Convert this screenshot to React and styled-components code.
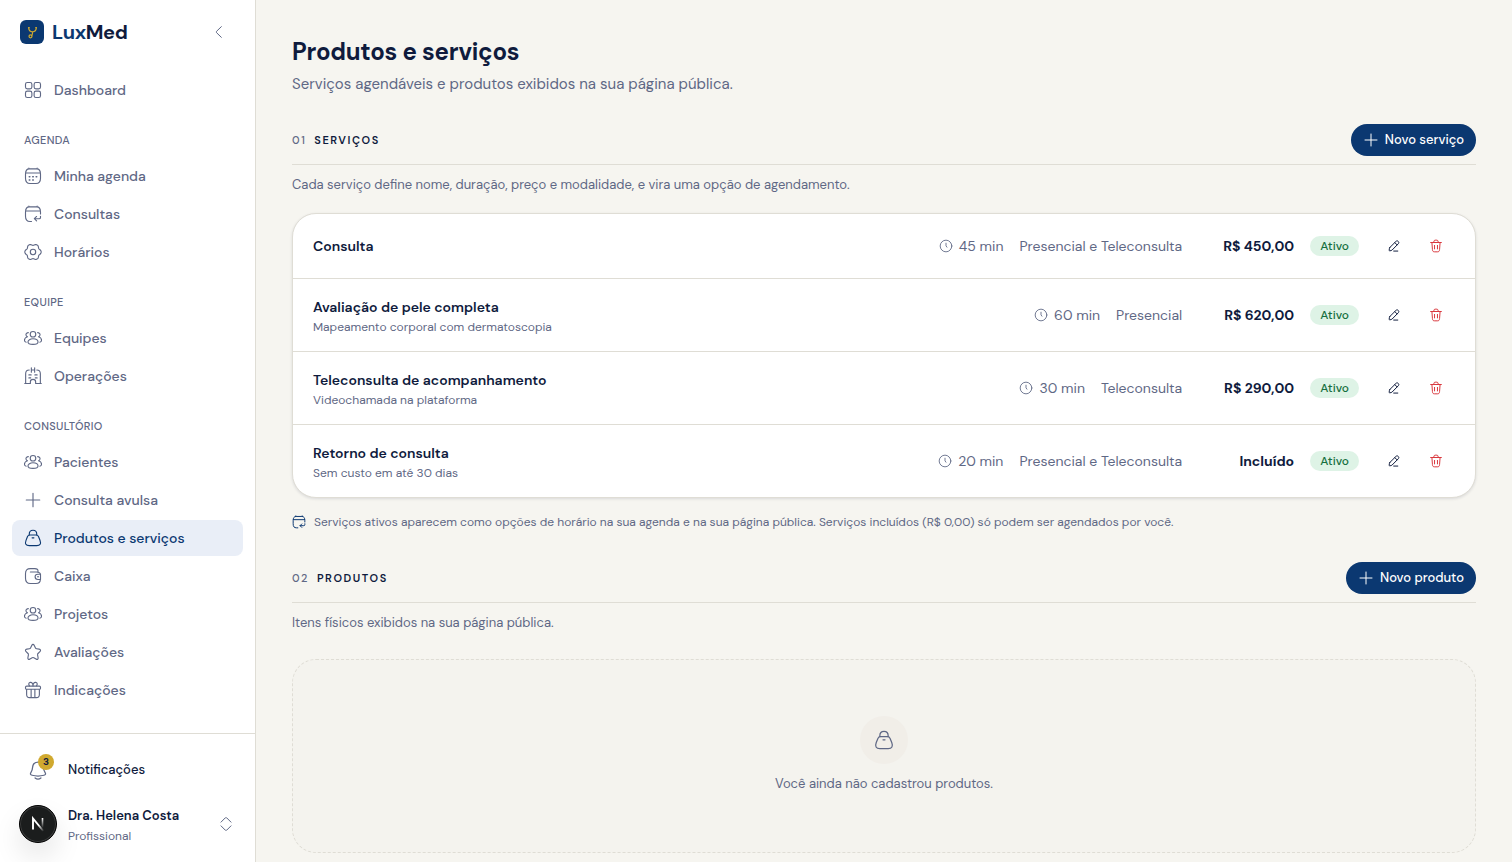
import React from 'react'
import styled, { createGlobalStyle, css } from 'styled-components'

const c = {
	ink: '#0f1b3d',
	muted: '#5f6885',
	brand: '#0b3871',
	line: '#dfddd5',
	page: '#f6f5f0',
	active: '#e9eef7',
	gold: '#d0a92f',
	red: '#d9363c',
}

const GlobalStyle = createGlobalStyle`
	*, *::before, *::after { box-sizing: border-box; }
	body {
		margin: 0;
		background: ${c.page};
		color: ${c.ink};
		font-family: 'DM Sans', Inter, 'Liberation Sans', sans-serif;
		font-size: 14px;
		line-height: 20px;
	}
	h1, h2, h3, p, ul { margin: 0; padding: 0; }
	ul { list-style: none; }
	a { color: inherit; text-decoration: none; }
	button { font: inherit; color: inherit; border: 0; padding: 0; background: none; cursor: pointer; }
`

// six rounded lobes, one of them pointing right
const gearPoints = Array.from({ length: 72 }, (_, i) => {
	const t = (i * Math.PI) / 36
	const r = 10 + Math.cos(6 * t) - 0.1 * Math.cos(12 * t)
	return `${(12 + r * Math.cos(t)).toFixed(2)},${(12 + r * Math.sin(t)).toFixed(2)}`
}).join(' ')

/* Icons, all drawn on a 24 x 24 grid */
const icons = {
	grid: (
		<>
			<rect x='2' y='2' width='8.5' height='8.5' rx='2.4' />
			<rect x='13.5' y='2' width='8.5' height='8.5' rx='2.4' />
			<rect x='2' y='13.5' width='8.5' height='8.5' rx='2.4' />
			<rect x='13.5' y='13.5' width='8.5' height='8.5' rx='2.4' />
		</>
	),
	calendar: (
		<>
			<path d='M2 9.500C2 5 3.500 2.500 7 2.500h10c3.500 0 5 2.500 5 7V15c0 5-1.500 7-6 7H8c-4.500 0-6-2-6-7zM2.300 8h19.400M6.500 2.500V1.500M17.500 2.500V1.500' />
			<path d='M7 13h.8M11.600 13h.8M16.200 13h.8M7 17.200h.8M11.600 17.200h.8' strokeWidth='2' />
		</>
	),
	calendarBack: (
		<>
			<path d='M10 22H8c-4.500 0-6-2-6-7V9.500C2 5 3.500 2.500 7 2.500h10c3.500 0 5 2.500 5 7V12M2.300 8h19.400M6.500 2.500V1.500M17.500 2.500V1.500' />
			<path d='M22 15v1.500c0 1.200-.6 1.800-1.800 1.800H14M16.800 15.300l-3 3 3 3' />
		</>
	),
	gear: (
		<>
			<circle cx='12' cy='12' r='3.600' />
			<polygon points={gearPoints} />
		</>
	),
	users: (
		<>
			<circle cx='12' cy='7' r='3.700' />
			<path d='M5.300 17.300c0-2.500 3-4.300 6.700-4.300s6.700 1.800 6.700 4.300c0 2.200-2 3.200-6.700 3.200s-6.700-1-6.700-3.200z' />
			<path d='M5.800 4.800C3.700 4.900 2.500 6.200 2.600 7.700c.1 1.300.8 2.200 2 2.700C2 11.200.6 13 .6 14.900c0 1.500.8 2.400 2.300 2.700M18.200 4.800c2.100.1 3.300 1.400 3.200 2.900-.1 1.300-.8 2.200-2 2.700 2.600.8 4 2.600 4 4.500 0 1.500-.8 2.400-2.300 2.700' />
		</>
	),
	hospital: (
		<>
			<path d='M1 22h7.500M15.500 22H23M2.200 22V9c0-3.500 1.300-5 4.800-5M21.800 22V9c0-3.500-1.300-5-4.800-5M8.500 22v-2.500c0-2 1.200-3 3.500-3s3.500 1 3.500 3V22' />
			<path d='M9.800 1v6M14.200 1v6M9.800 4h4.400M6.500 10.500h3M14.500 10.500h3M6.500 14.500H9M15 14.500h2.500' />
		</>
	),
	plus: <path d='M12 3v18M3 12h18' />,
	bag: (
		<>
			<path d='M7.500 8h9c1.400 0 2.200.8 2.800 2.100l2 5c1.700 4.500.3 7.100-4.300 7.100H7c-4.600 0-6-2.600-4.300-7.100l2-5C5.300 8.800 6.100 8 7.500 8z' />
			<path d='M7 8V7c0-3.400 2-5.300 5-5.300S17 3.600 17 7v1M10.800 11.800h2.400' />
		</>
	),
	wallet: (
		<>
			<path d='M18.700 6.600V5.500c0-2.200-1.200-3.300-4.200-3.300h-6C3.800 2.200 2 4 2 9v6c0 5 1.800 7 6.500 7H16c4.200 0 5.800-1.400 5.800-5.300M8.500 6.600h8c3.500 0 5 .9 5.300 3' />
			<path d='M22 9.600h-3.500c-2.300 0-3.700 1.400-3.700 3.500s1.400 3.500 3.700 3.500H22z' />
			<path d='M18.500 13.100h.4' strokeWidth='2' />
		</>
	),
	star: <path d='M10.300 3.300c.9-1.900 2.500-1.900 3.400 0l1.600 3.300c.3.600.9 1 1.500 1.100l3.400.5c2 .3 2.500 1.900 1 3.300l-2.500 2.500c-.5.500-.7 1.200-.6 1.900l.7 3.500c.4 2.200-.9 3.100-2.800 1.900l-2.900-1.700c-.7-.4-1.500-.4-2.200 0L8 21.300c-1.900 1.200-3.200.3-2.800-1.900l.7-3.500c.1-.7-.1-1.400-.6-1.900l-2.500-2.500c-1.500-1.400-1-3 1-3.300l3.400-.5c.6-.1 1.200-.5 1.500-1.100z' />,
	gift: (
		<>
			<path d='M3.500 11h17v7c0 3-1 4.200-4 4.200h-9c-3 0-4-1.200-4-4.200zM3.500 6.800h17c1 0 1.500.5 1.500 1.500v1.200c0 1-.5 1.500-1.500 1.500h-17C2.500 11 2 10.500 2 9.500V8.300c0-1 .5-1.500 1.500-1.500zM9.500 11v11M14.500 11v11' />
			<path d='M12 6.500C12 3 10.500 1.500 8.300 1.800 5.800 2.200 6 5 7.300 6.500M12 6.500C12 3 13.500 1.500 15.700 1.800 18.200 2.200 18 5 16.700 6.500' />
		</>
	),
	bell: (
		<>
			<path d='M12 2.500c-3.700 0-6.200 2.700-6.500 6.300-.2 2.800-.7 4.300-1.900 6-1.300 1.900-.6 3 1.300 3.500 4.600 1.200 9.600 1.200 14.200 0 1.900-.5 2.600-1.600 1.300-3.500-1.200-1.700-1.700-3.200-1.900-6C18.200 5.200 15.700 2.500 12 2.500z' />
			<path d='M8.500 21.500c2 1.600 5 1.600 7 0' />
		</>
	),
	clock: (
		<>
			<circle cx='12' cy='12' r='10' />
			<path d='M12 7.200v4.500l1.600 2.300' />
		</>
	),
	pencil: <path d='M4.600 14.800 15.300 4.200c1.400-1.400 2.700-1.400 4 0s1.300 2.600 0 4L8.800 18.900c-.5.500-1 .8-1.700.9l-2.300.5c-.8.100-1.200-.3-1.100-1.100l.4-2.800c.1-.6.200-1.200.5-1.600zM13.500 6.300l3.800 3.800M11.500 20.700h7' />,
	trash: <path d='M2.800 6h18.400M19 6l-.9 12.200c-.3 2.800-1 3.800-3.800 3.800H9.700c-2.800 0-3.500-1-3.800-3.800L5 6M8 6l.6-2.400C8.900 2.500 9.400 2 10.500 2h3c1.100 0 1.600.5 1.900 1.600L16 6M9.500 11v6M14.500 11v6' />,
	left: <path d='M15.500 4 8.300 11c-.7.700-.7 1.300 0 2l7.200 7' />,
	sort: <path d='M4.500 9.200 10.700 3c.9-.9 1.700-.9 2.600 0l6.200 6.200M4.500 14.800l6.200 6.200c.9.900 1.700.9 2.600 0l6.200-6.200' />,
}

const Svg = styled.svg`
	flex: none;
	display: block;
	width: ${p => p.$size}px;
	height: ${p => p.$size}px;
	fill: none;
	stroke: ${p => p.$color || 'currentColor'};
	stroke-width: ${p => (p.$bold ? 1.7 : 1.5)};
	stroke-linecap: round;
	stroke-linejoin: round;
`
const Icon = ({ name, size = 18, color, bold }) => (
	<Svg viewBox='0 0 24 24' $size={size} $color={color} $bold={bold} aria-hidden='true'>
		{icons[name]}
	</Svg>
)

const Shell = styled.div`
	display: flex;
	height: 100vh;
`

/* Sidebar */
const Sidebar = styled.aside`
	flex: none;
	display: flex;
	flex-direction: column;
	width: 256px;
	background: #fff;
	border-right: 1px solid ${c.line};
`
const Brand = styled.div`
	display: flex;
	align-items: center;
	justify-content: space-between;
	height: 64px;
	padding: 0 28px 0 20px;
`
const BrandLink = styled.a`
	display: flex;
	align-items: center;
	gap: 8px;
	font-size: 20px;
	line-height: 24px;
	font-weight: 700;
	letter-spacing: -0.02em;
	span {
		color: ${c.brand};
	}
`
const BrandMark = styled.svg`
	width: 24px;
	height: 24px;
`
const Collapse = styled.button`
	color: ${c.muted};
`
const Nav = styled.nav`
	flex: 1;
	min-height: 0;
	overflow-y: auto;
	scrollbar-width: none;
	padding: 8px 12px;
`
const NavList = styled.ul`
	display: flex;
	flex-direction: column;
	gap: 2px;
`
const NavLabel = styled.h3`
	padding: 24px 12px 10px;
	font-size: 11px;
	line-height: 16px;
	font-weight: 500;
	letter-spacing: 0.03em;
	color: ${c.muted};
`
const NavLink = styled.a`
	display: flex;
	align-items: center;
	gap: 12px;
	height: 36px;
	padding: 0 12px;
	border-radius: 8px;
	font-weight: 500;
	color: ${c.muted};
	${p =>
		p.$active &&
		css`
			background: ${c.active};
			color: ${c.brand};
		`}
`
const Footer = styled.div`
	display: flex;
	flex-direction: column;
	gap: 14px;
	padding: 16px 20px 18px 19px;
	border-top: 1px solid ${c.line};
`
const FooterButton = styled.button`
	display: flex;
	align-items: center;
	gap: 11px;
	min-height: 40px;
	padding-right: 1px;
	text-align: left;
	font-size: 13px;
	line-height: 24px;
	font-weight: ${p => (p.$strong ? 600 : 500)};
	small {
		display: block;
		font-size: 12px;
		line-height: 16px;
		font-weight: 400;
		color: ${c.muted};
	}
`
const Grow = styled.span`
	flex: 1;
`
const BellBox = styled.span`
	position: relative;
	display: grid;
	place-items: center;
	width: 38px;
	height: 38px;
	color: ${c.muted};
`
const Count = styled.span`
	position: absolute;
	top: 3px;
	right: 3px;
	width: 16px;
	height: 16px;
	border-radius: 8px;
	background: ${c.gold};
	color: ${c.ink};
	font-size: 10px;
	line-height: 16px;
	font-weight: 700;
	text-align: center;
`
const Avatar = styled.span`
	display: grid;
	place-items: center;
	width: 38px;
	height: 38px;
	border: 1px solid #000;
	border-radius: 50%;
	background: #1b1d1d;
	box-shadow: inset 0 0 0 1px #3c3d3d, 0 14px 28px rgba(0, 0, 0, 0.1);
`

/* Main column */
const Main = styled.main`
	flex: 1;
	min-width: 0;
	overflow-y: auto;
	scrollbar-width: none;
	padding: 36px;
`
const Title = styled.h1`
	font-size: 24px;
	line-height: 32px;
	font-weight: 700;
	letter-spacing: -0.01em;
`
const Lead = styled.p`
	margin: 4px 0 28px;
	font-size: 15px;
	line-height: 24px;
	color: ${c.muted};
`
const Section = styled.section`
	margin-bottom: 30px;
`
const SectionHead = styled.header`
	display: flex;
	align-items: center;
	justify-content: space-between;
	padding-bottom: 8px;
	border-bottom: 1px solid ${c.line};
`
const SectionTitle = styled.h2`
	display: flex;
	gap: 8px;
	font-size: 11px;
	line-height: 16px;
	font-weight: 600;
	letter-spacing: 0.14em;
	span {
		font-weight: 500;
		color: ${c.muted};
	}
`
const Primary = styled.button`
	display: flex;
	align-items: center;
	gap: 6px;
	height: 32px;
	padding: 0 12px;
	border-radius: 16px;
	background: ${c.brand};
	color: #fff;
	font-size: 13px;
	font-weight: 500;
`
const Hint = styled.p`
	margin: 10px 0 18px;
	font-size: 13px;
	color: ${c.muted};
`
const Card = styled.ul`
	border: 1px solid ${c.line};
	border-radius: 24px;
	background: #fff;
	box-shadow: 0 1px 3px rgba(15, 27, 61, 0.12);
`
const Row = styled.li`
	display: flex;
	align-items: center;
	gap: 16px;
	padding: 16px 20px;
	& + & {
		border-top: 1px solid ${c.line};
	}
`
const RowText = styled.div`
	flex: 1;
	min-width: 0;
	h3 {
		font-size: 14px;
		line-height: 24px;
		font-weight: 600;
	}
	p {
		font-size: 12px;
		line-height: 16px;
		color: ${c.muted};
	}
`
const Meta = styled.span`
	display: flex;
	align-items: center;
	gap: 6px;
	color: ${c.muted};
`
const Price = styled.span`
	width: 96px;
	text-align: right;
	font-weight: 700;
`
const Badge = styled.span`
	padding: 0 10px;
	border-radius: 10px;
	background: #def3e6;
	color: #17703f;
	font-size: 12px;
	line-height: 20px;
	font-weight: 500;
`
const Actions = styled.div`
	display: flex;
	gap: 4px;
`
const IconButton = styled.button`
	display: grid;
	place-items: center;
	width: 38px;
	height: 32px;
	color: ${p => (p.$danger ? c.red : c.ink)};
`
const Note = styled.p`
	display: flex;
	align-items: center;
	gap: 8px;
	margin-top: 14px;
	font-size: 12px;
	color: ${c.muted};
`
const Empty = styled.div`
	display: flex;
	flex-direction: column;
	align-items: center;
	gap: 10px;
	margin-top: 26px;
	padding: 56px 20px 58px;
	border: 1px dashed ${c.line};
	border-radius: 24px;
	background: #f4f3ee;
	font-size: 13px;
	color: ${c.muted};
`
const EmptyIcon = styled.span`
	display: grid;
	place-items: center;
	width: 48px;
	height: 48px;
	border-radius: 50%;
	background: #f1eee8;
`

const groups = [
	{ items: [['grid', 'Dashboard']] },
	{
		label: 'AGENDA',
		items: [
			['calendar', 'Minha agenda'],
			['calendarBack', 'Consultas'],
			['gear', 'Horários'],
		],
	},
	{
		label: 'EQUIPE',
		items: [
			['users', 'Equipes'],
			['hospital', 'Operações'],
		],
	},
	{
		label: 'CONSULTÓRIO',
		items: [
			['users', 'Pacientes'],
			['plus', 'Consulta avulsa'],
			['bag', 'Produtos e serviços'],
			['wallet', 'Caixa'],
			['users', 'Projetos'],
			['star', 'Avaliações'],
			['gift', 'Indicações'],
		],
	},
]
const current = 'Produtos e serviços'

const services = [
	{ name: 'Consulta', time: '45 min', mode: 'Presencial e Teleconsulta', price: 'R$ 450,00' },
	{
		name: 'Avaliação de pele completa',
		about: 'Mapeamento corporal com dermatoscopia',
		time: '60 min',
		mode: 'Presencial',
		price: 'R$ 620,00',
	},
	{
		name: 'Teleconsulta de acompanhamento',
		about: 'Videochamada na plataforma',
		time: '30 min',
		mode: 'Teleconsulta',
		price: 'R$ 290,00',
	},
	{
		name: 'Retorno de consulta',
		about: 'Sem custo em até 30 dias',
		time: '20 min',
		mode: 'Presencial e Teleconsulta',
		price: 'Incluído',
	},
]

const Logo = () => (
	<BrandMark viewBox='0 0 24 24' aria-hidden='true'>
		<rect width='24' height='24' rx='6' fill={c.brand} />
		<g fill='none' stroke={c.gold} strokeWidth='1.200' strokeLinecap='round'>
			<path d='M8.500 7.700h.8M15.700 7.700h.8M8.700 8c.1 2.200 1.500 3.700 3.800 3.900 2.300-.2 3.700-1.700 3.800-3.900M12.500 12c.2 1.600 0 2.800-.8 3.700' />
			<circle cx='10.500' cy='16.300' r='1.500' />
		</g>
	</BrandMark>
)

const AvatarMark = () => (
	<svg width='16' height='16' viewBox='0 0 16 16' fill='none' aria-hidden='true'>
		<defs>
			<linearGradient id='fade-down' x1='0' y1='2' x2='0' y2='12' gradientUnits='userSpaceOnUse'>
				<stop stopColor='#fff' />
				<stop offset='1' stopColor='#fff' stopOpacity='0' />
			</linearGradient>
			<linearGradient id='fade-end' x1='9' y1='9' x2='14' y2='15' gradientUnits='userSpaceOnUse'>
				<stop stopColor='#fff' />
				<stop offset='1' stopColor='#fff' stopOpacity='0' />
			</linearGradient>
		</defs>
		<path d='M3 13.500V2.500L13.300 15' stroke='url(#fade-end)' strokeWidth='1.900' />
		<path d='M12.500 2v10' stroke='url(#fade-down)' strokeWidth='1.600' />
	</svg>
)

const SideNav = () => (
	<Sidebar>
		<Brand>
			<BrandLink href='#'>
				<Logo />
				<div>
					<span>Lux</span>Med
				</div>
			</BrandLink>
			<Collapse aria-label='Recolher menu'>
				<Icon name='left' size={16} />
			</Collapse>
		</Brand>
		<Nav>
			{groups.map(({ label, items }) => (
				<React.Fragment key={label || 'top'}>
					{label && <NavLabel>{label}</NavLabel>}
					<NavList>
						{items.map(([icon, text]) => (
							<li key={text}>
								<NavLink href='#' $active={text === current}>
									<Icon name={icon} />
									{text}
								</NavLink>
							</li>
						))}
					</NavList>
				</React.Fragment>
			))}
		</Nav>
		<Footer>
			<FooterButton>
				<BellBox>
					<Icon name='bell' size={20} />
					<Count>3</Count>
				</BellBox>
				Notificações
			</FooterButton>
			<FooterButton $strong>
				<Avatar>
					<AvatarMark />
				</Avatar>
				<Grow>
					Dra. Helena Costa
					<small>Profissional</small>
				</Grow>
				<Icon name='sort' size={16} color={c.muted} />
			</FooterButton>
		</Footer>
	</Sidebar>
)

const ServiceRow = ({ name, about, time, mode, price }) => (
	<Row>
		<RowText>
			<h3>{name}</h3>
			{about && <p>{about}</p>}
		</RowText>
		<Meta>
			<Icon name='clock' size={14} />
			{time}
		</Meta>
		<Meta>{mode}</Meta>
		<Price>{price}</Price>
		<Badge>Ativo</Badge>
		<Actions>
			<IconButton aria-label={`Editar ${name}`}>
				<Icon name='pencil' size={14} bold />
			</IconButton>
			<IconButton aria-label={`Excluir ${name}`} $danger>
				<Icon name='trash' size={14} bold />
			</IconButton>
		</Actions>
	</Row>
)

const SectionTop = ({ number, title, action }) => (
	<SectionHead>
		<SectionTitle>
			<span>{number}</span>
			{title}
		</SectionTitle>
		<Primary>
			<Icon name='plus' size={16} />
			{action}
		</Primary>
	</SectionHead>
)

const App = () => (
	<>
		<GlobalStyle />
		<Shell>
			<SideNav />
			<Main>
				<Title>Produtos e serviços</Title>
				<Lead>Serviços agendáveis e produtos exibidos na sua página pública.</Lead>
				<Section>
					<SectionTop number='01' title='SERVIÇOS' action='Novo serviço' />
					<Hint>Cada serviço define nome, duração, preço e modalidade, e vira uma opção de agendamento.</Hint>
					<Card>
						{services.map(service => (
							<ServiceRow key={service.name} {...service} />
						))}
					</Card>
					<Note>
						<Icon name='calendarBack' size={14} color={c.brand} bold />
						Serviços ativos aparecem como opções de horário na sua agenda e na sua página pública. Serviços
						incluídos (R$ 0,00) só podem ser agendados por você.
					</Note>
				</Section>
				<Section>
					<SectionTop number='02' title='PRODUTOS' action='Novo produto' />
					<Hint>Itens físicos exibidos na sua página pública.</Hint>
					<Empty>
						<EmptyIcon>
							<Icon name='bag' size={20} />
						</EmptyIcon>
						<p>Você ainda não cadastrou produtos.</p>
					</Empty>
				</Section>
			</Main>
		</Shell>
	</>
)

export default App
